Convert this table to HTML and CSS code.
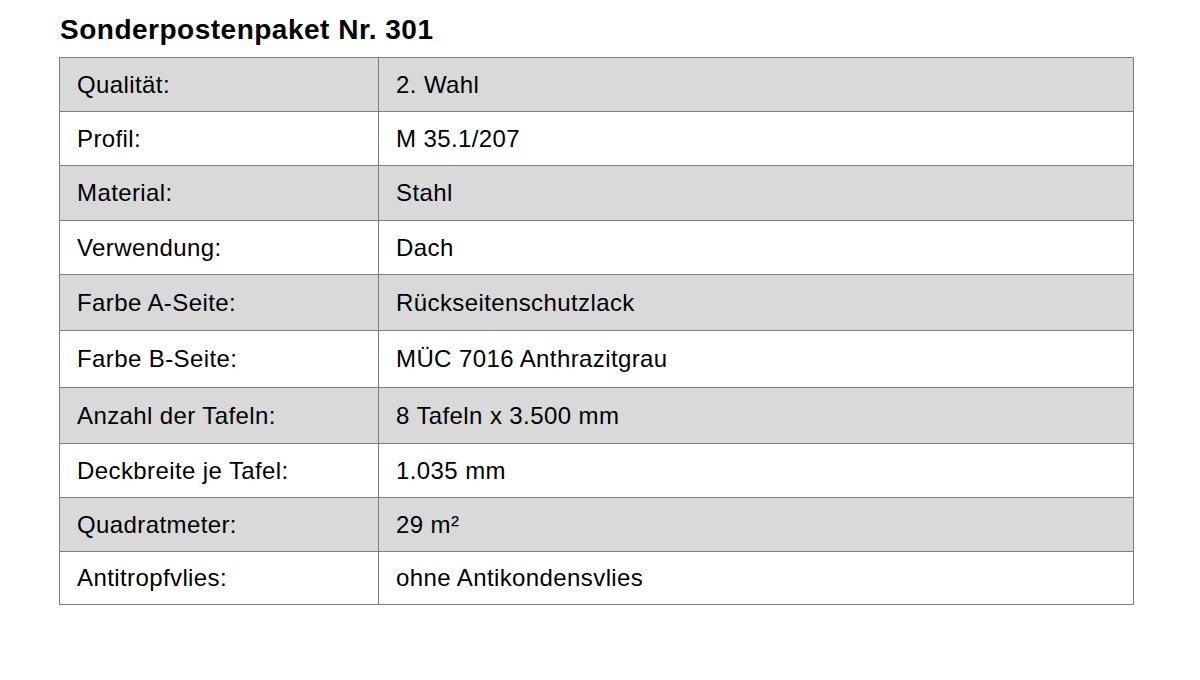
FILE: index.html
```html
<!DOCTYPE html>
<html lang="de">
<head>
<meta charset="utf-8">
<title>Sonderpostenpaket Nr. 301</title>
<link rel="stylesheet" href="styles.css">
</head>
<body>
<div class="page">
  <h1 class="title">Sonderpostenpaket Nr. 301</h1>
  <table class="specs">
    <tbody>
      <tr class="shade h54"><td class="label">Qualität:</td><td>2. Wahl</td></tr>
      <tr class="h54"><td class="label">Profil:</td><td>M 35.1/207</td></tr>
      <tr class="shade h55"><td class="label">Material:</td><td>Stahl</td></tr>
      <tr class="h54"><td class="label">Verwendung:</td><td>Dach</td></tr>
      <tr class="shade h56"><td class="label">Farbe A-Seite:</td><td>Rückseitenschutzlack</td></tr>
      <tr class="h57"><td class="label">Farbe B-Seite:</td><td>MÜC 7016 Anthrazitgrau</td></tr>
      <tr class="shade h56"><td class="label">Anzahl der Tafeln:</td><td>8 Tafeln x 3.500 mm</td></tr>
      <tr class="h54"><td class="label">Deckbreite je Tafel:</td><td>1.035 mm</td></tr>
      <tr class="shade h54"><td class="label">Quadratmeter:</td><td>29 m²</td></tr>
      <tr class="h53"><td class="label">Antitropfvlies:</td><td>ohne Antikondensvlies</td></tr>
    </tbody>
  </table>
</div>
</body>
</html>
```

FILE: styles.css
```css
html, body {
  margin: 0;
  padding: 0;
  background: #ffffff;
}
body {
  font-family: "Liberation Sans", Arial, sans-serif;
  color: #000000;
}
.page {
  padding: 13px 0 0 59px;
}
.title {
  margin: 0 0 0 1px;
  font-size: 28px;
  font-weight: bold;
  letter-spacing: 0.5px;
  line-height: 34px;
  height: 44px;
}
.specs {
  border-collapse: collapse;
  width: 1075px;
  font-size: 24px;
  letter-spacing: 0.4px;
}
.specs td {
  border: 1px solid #7f7f7f;
  padding: 0 17px;
  vertical-align: middle;
  line-height: 26px;
}
.specs td.label {
  width: 284px;
}
.shade td {
  background: #d9d9d9;
}
.h53 { height: 53px; }
.h54 { height: 54px; }
.h55 { height: 55px; }
.h56 { height: 56px; }
.h57 { height: 57px; }
```
